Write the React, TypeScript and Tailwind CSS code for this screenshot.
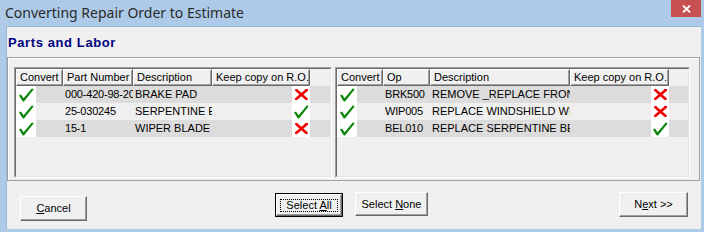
import type { ReactNode } from "react";

const SANS = "font-['Liberation_Sans',Arial,sans-serif]";

function Check() {
  return (
    <svg width="15" height="14" viewBox="0 0 15 14" className="block">
      <polygon points="0,7.5 2,6.5 4.6,10.2 13,0.3 14.6,1.4 5,13.6 3.8,13.6" fill="#0a850a" />
    </svg>
  );
}

function Cross() {
  return (
    <svg width="13" height="11" viewBox="0 0 13 11" className="block">
      <path d="M1.5 1.2 L11.5 10 M11.8 1 L1.2 10" stroke="#f00000" strokeWidth="2.6" strokeLinecap="round" />
      <path d="M0.5 0.8 L3 1.5 M10 0.5 L12.6 1" stroke="#f00000" strokeWidth="1.4" />
    </svg>
  );
}

function HeaderCell({ w, children }: { w: string; children: ReactNode }) {
  return (
    <div
      className={`${w} h-[17px] shrink-0 border-t border-l border-t-white border-l-white border-b border-r border-b-[#696969] border-r-[#696969] shadow-[inset_-1px_-1px_0_#a0a0a0] bg-[#f0f0f0] pl-[3px] text-[11px] leading-[15px] text-black whitespace-nowrap overflow-hidden`}
    >
      {children}
    </div>
  );
}

type Row = { a: string; b: string; keep: boolean };

// the grid cuts long values at the column edge, as the real one does
const PARTS: Row[] = [
  { a: "000-420-98-20", b: "BRAKE PAD", keep: false },
  { a: "25-030245", b: "SERPENTINE E", keep: true },
  { a: "15-1", b: "WIPER BLADE", keep: false },
];

const LABOR: Row[] = [
  { a: "BRK500", b: "REMOVE _REPLACE FRONT", keep: false },
  { a: "WIP005", b: "REPLACE WINDSHIELD WI", keep: false },
  { a: "BEL010", b: "REPLACE SERPENTINE BE", keep: true },
];

function Grid({
  width,
  cols,
  heads,
  rows,
}: {
  width: string;
  cols: [string, string, string, string];
  heads: [string, string, string, string];
  rows: Row[];
}) {
  return (
    <div className={`${width} h-[111px] shrink-0 border-t border-l border-t-[#a0a0a0] border-l-[#a0a0a0] border-b border-r border-b-white border-r-white`}>
      <div className="h-full border-t border-l border-t-[#696969] border-l-[#696969] border-b border-r border-b-[#e3e3e3] border-r-[#e3e3e3] bg-[#f0f0f0] overflow-hidden">
        <div className="flex">
          {heads.map((h, i) => (
            <HeaderCell key={h} w={cols[i]}>
              {h}
            </HeaderCell>
          ))}
        </div>
        {rows.map((r, i) => (
          <div
            key={r.a}
            className={`flex h-[17px] text-[11px] leading-[17px] text-black ${i === 1 ? "bg-[#efefef]" : "bg-[#dcdcdc]"}`}
          >
            <div className={`${cols[0]} shrink-0 flex`}>
              <div className="w-[20px] h-full bg-white flex items-center justify-center">
                <Check />
              </div>
            </div>
            <div className={`${cols[1]} shrink-0 overflow-hidden whitespace-nowrap pl-[2px] tracking-[-0.2px]`}>{r.a}</div>
            <div className={`${cols[2]} shrink-0 overflow-hidden whitespace-nowrap pl-[2px]`}>{r.b}</div>
            <div className={`${cols[3]} shrink-0 flex justify-end`}>
              <div className="w-[18px] h-full bg-white flex items-center justify-center">
                {r.keep ? <Check /> : <Cross />}
              </div>
            </div>
          </div>
        ))}
      </div>
    </div>
  );
}

function Button({
  w,
  h,
  className,
  children,
  isDefault,
}: {
  w: string;
  h: string;
  className: string;
  children: ReactNode;
  isDefault?: boolean;
}) {
  const face = (
    <div className="w-full h-full border-t border-l border-t-white border-l-white border-b border-r border-b-[#696969] border-r-[#696969] shadow-[inset_-1px_-1px_0_#a0a0a0] bg-[#f0f0f0] flex items-center justify-center text-[11px] text-black">
      {isDefault ? (
        <div className="w-[calc(100%-6px)] h-[calc(100%-7px)] border border-dotted border-black flex items-center justify-center">
          {children}
        </div>
      ) : (
        children
      )}
    </div>
  );
  return (
    <div className={`${w} ${h} shrink-0 ${className} ${isDefault ? "border border-black" : ""}`}>
      {face}
    </div>
  );
}

export default function App() {
  return (
    <div className={`w-[704px] h-[232px] bg-[#adcbe8] flex flex-col overflow-hidden ${SANS}`}>
      <div className="h-[26px] shrink-0 flex items-start justify-between">
        <div className="pl-[5px] pt-[2px] font-['Noto_Sans',sans-serif] text-[14px] leading-[22px] text-[#2a2a2a]">
          Converting Repair Order to Estimate
        </div>
        <div className="mr-[3px] w-[30px] h-[17px] bg-[#c75050] flex items-center justify-center">
          <svg width="9" height="8" viewBox="0 0 9 8">
            <path d="M1 0.5 L8 7.5 M8 0.5 L1 7.5" stroke="#fff" strokeWidth="1.8" />
          </svg>
        </div>
      </div>

      <div className="flex-1 ml-[6px] mr-[3px] mb-[3px] bg-[#f0f0f0] border-t border-l border-[#9bb8d5] flex flex-col">
        <div className="pl-[1px] pt-[8px] h-[30px] text-[13px] leading-[16px] font-bold text-[#000080] tracking-[0.6px]">
          Parts and Labor
        </div>
        <div className="ml-[0px] mr-[1px] h-[124px] border border-[#a0a0a0] shadow-[inset_1px_1px_0_#fff] pl-[6px] pt-[9px] flex gap-[3px]">
          <Grid
            width="w-[318px]"
            cols={["w-[47px]", "w-[70px]", "w-[79px]", "w-[98px]"]}
            heads={["Convert", "Part Number", "Description", "Keep copy on R.O."]}
            rows={PARTS}
          />
          <Grid
            width="w-[355px]"
            cols={["w-[46px]", "w-[47px]", "w-[140px]", "w-[99px]"]}
            heads={["Convert", "Op", "Description", "Keep copy on R.O."]}
            rows={LABOR}
          />
        </div>
        <div className="flex items-start">
          <Button w="w-[67px]" h="h-[25px]" className="ml-[13px] mt-[15px]">
            <span>
              <u>C</u>ancel
            </span>
          </Button>
          <Button w="w-[68px]" h="h-[24px]" className="ml-[188px] mt-[12px]" isDefault>
            <span>
              Select <u>A</u>ll
            </span>
          </Button>
          <Button w="w-[73px]" h="h-[24px]" className="ml-[12px] mt-[11px]">
            <span>
              Select <u>N</u>one
            </span>
          </Button>
          <Button w="w-[69px]" h="h-[25px]" className="ml-[191px] mt-[11px]">
            <span>
              N<u>e</u>xt &gt;&gt;
            </span>
          </Button>
        </div>
      </div>
    </div>
  );
}
